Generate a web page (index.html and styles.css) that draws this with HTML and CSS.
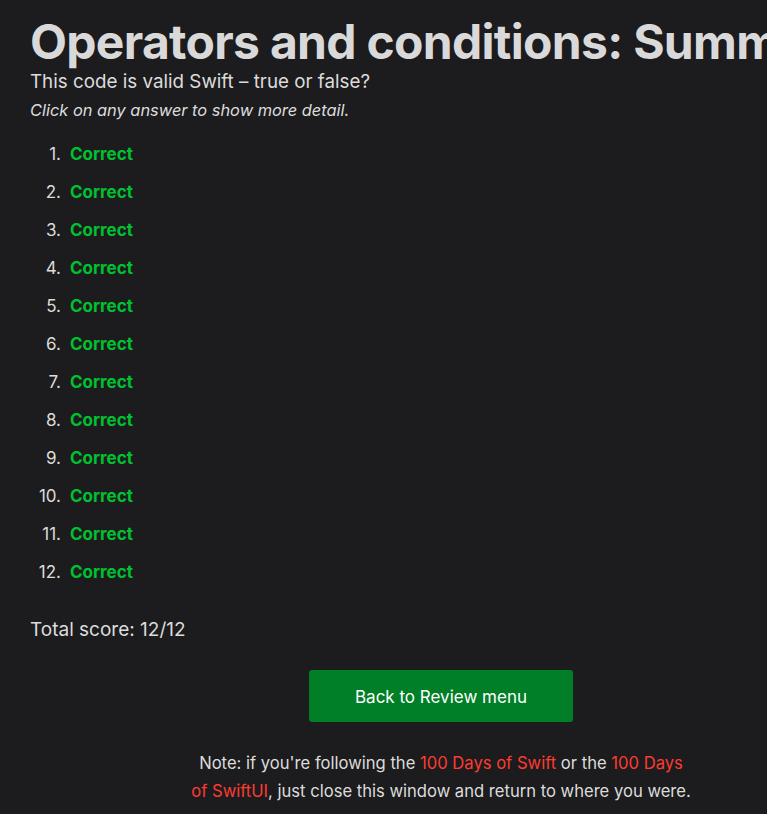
FILE: index.html
```html
<!DOCTYPE html>
<html>
<head>
<meta charset="utf-8">
<link rel="stylesheet" href="styles.css">
</head>
<body>
<main class="page">
  <h1 class="title">Operators and conditions: Summary</h1>
  <p class="question">This code is valid Swift – true or false?</p>
  <p class="hint">Click on any answer to show more detail.</p>
  <ol class="answers">
    <li><span class="correct">Correct</span></li>
    <li><span class="correct">Correct</span></li>
    <li><span class="correct">Correct</span></li>
    <li><span class="correct">Correct</span></li>
    <li><span class="correct">Correct</span></li>
    <li><span class="correct">Correct</span></li>
    <li><span class="correct">Correct</span></li>
    <li><span class="correct">Correct</span></li>
    <li><span class="correct">Correct</span></li>
    <li><span class="correct">Correct</span></li>
    <li><span class="correct">Correct</span></li>
    <li><span class="correct">Correct</span></li>
  </ol>
  <p class="score">Total score: 12/12</p>
  <div class="actions">
    <a class="button" href="#">Back to Review menu</a>
  </div>
  <p class="note">Note: if you're following the <a href="#">100 Days of Swift</a> or the <a href="#">100 Days of SwiftUI</a>, just close this window and return to where you were.</p>
</main>
</body>
</html>
```
FILE: styles.css
```css
html, body {
  margin: 0;
  padding: 0;
  background: #1c1c1e;
  overflow: hidden;
}
body {
  font-family: Inter, "Noto Sans", sans-serif;
  color: #dcdcdc;
  font-size: 17px;
}
.page {
  width: 822px;
  padding: 0 0 0 30px;
}
.title {
  margin: 17px 0 4px;
  font-size: 48px;
  font-weight: 700;
  line-height: 50px;
  white-space: nowrap;
  letter-spacing: -0.7px;
  color: #d9d9d9;
}
.question {
  margin: 0;
  font-size: 18.8px;
  line-height: 22px;
}
.hint {
  margin: 5px 0 0;
  font-style: italic;
  line-height: 24px;
  font-size: 16.4px;
}
.answers {
  margin: 13px 0 0;
  padding: 0;
  list-style: none;
  counter-reset: item;
}
.answers li {
  display: flex;
  line-height: 38px;
  counter-increment: item;
}
.answers li::before {
  content: counter(item) ".";
  width: 31px;
  margin-right: 9px;
  text-align: right;
}
.correct {
  color: #00c12f;
  font-weight: 700;
}
.score {
  margin: 26px 0 0;
  font-size: 19px;
  line-height: 26px;
}
.actions {
  display: flex;
  justify-content: center;
  margin-top: 27px;
}
.button {
  display: flex;
  align-items: center;
  justify-content: center;
  width: 264px;
  height: 52px;
  padding-top: 2px;
  box-sizing: border-box;
  background: #007f27;
  color: #fff;
  text-decoration: none;
  border-radius: 3px;
}
.note {
  width: 501px;
  margin: 27px auto 0;
  text-align: center;
  font-size: 16.6px;
  line-height: 28px;
}
.note a {
  color: #ff3b30;
  text-decoration: none;
}
```
